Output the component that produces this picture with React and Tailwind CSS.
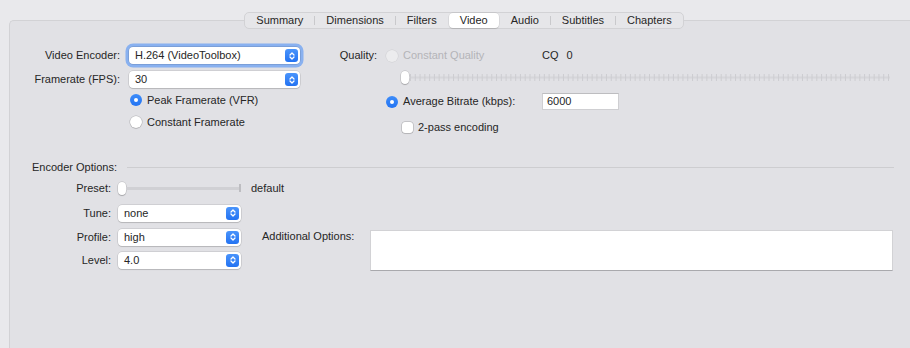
import { Fragment } from 'react';

const tabs = ['Summary', 'Dimensions', 'Filters', 'Video', 'Audio', 'Subtitles', 'Chapters'];
const activeTab = 3;

function Chevrons() {
  return (
    <svg width="8" height="10" viewBox="0 0 8 10" fill="none">
      <path d="M2 4 L4 2 L6 4" stroke="white" strokeWidth="1.3" strokeLinecap="round" strokeLinejoin="round" />
      <path d="M2 6 L4 8 L6 6" stroke="white" strokeWidth="1.3" strokeLinecap="round" strokeLinejoin="round" />
    </svg>
  );
}

function Select({ value, className, focused }) {
  const base =
    'flex h-[17px] shrink-0 items-center justify-between rounded-[4px] bg-white pl-[6px] pr-[2px] ';
  const ring = focused
    ? 'shadow-[0_0_0_0.5px_rgba(0,0,0,0.2),0_0_0_3.5px_rgba(78,145,246,0.6)]'
    : 'shadow-[0_0_0_0.5px_rgba(0,0,0,0.16),0_1px_1px_rgba(0,0,0,0.12)]';
  return (
    <div className={base + ring + ' ' + className}>
      <span>{value}</span>
      <span className="flex h-[13px] w-[13px] items-center justify-center rounded-[3px] bg-gradient-to-b from-[#4a94fb] to-[#2272f2]">
        <Chevrons />
      </span>
    </div>
  );
}

function Radio({ checked, disabled }) {
  if (checked) {
    return (
      <span className="flex h-[12px] w-[12px] shrink-0 items-center justify-center rounded-full bg-gradient-to-b from-[#3d8cf9] to-[#2374f3]">
        <span className="h-[4px] w-[4px] rounded-full bg-white" />
      </span>
    );
  }
  return (
    <span
      className={
        disabled
          ? 'h-[12px] w-[12px] shrink-0 rounded-full bg-[#ececee] shadow-[0_0_0_0.5px_rgba(0,0,0,0.08)]'
          : 'h-[12px] w-[12px] shrink-0 rounded-full bg-white shadow-[0_0_0_0.5px_rgba(0,0,0,0.22),0_1px_1px_rgba(0,0,0,0.1)]'
      }
    />
  );
}

function Thumb() {
  return (
    <span className="h-[13px] w-[8px] shrink-0 rounded-[4px] bg-white shadow-[0_0_0_0.5px_rgba(0,0,0,0.18),0_1px_1px_rgba(0,0,0,0.18)]" />
  );
}

function TickTrack() {
  const ticks = Array.from({ length: 101 }, (_, i) => 1 + i * 4.78);
  return (
    <svg width="482" height="13" viewBox="0 0 482 13">
      <rect x="0" y="5.5" width="481" height="2" fill="#d6d6da" />
      {ticks.map((x) => (
        <rect key={x} x={x} y="3" width="1" height="7" fill="#cdcdd1" />
      ))}
    </svg>
  );
}

export default function App() {
  return (
    <div
      className="h-[348px] w-[910px] overflow-hidden bg-[#e9e9ec] pl-[9px] pt-[20px] text-[11px] text-[#262626]"
      style={{ fontFamily: '"Liberation Sans", Arial, sans-serif' }}
    >
      <div className="h-[340px] w-[909px] rounded-tl-[5px] border-l border-t border-[#d2d2d5] bg-[#e1e1e5]">
        {/* tab bar */}
        <div className="-mt-[9px] flex justify-center">
          <div className="flex h-[17px] items-center rounded-[5px] border border-[#d2d2d5] bg-[#e6e6e9]">
            {tabs.map((t, i) => (
              <Fragment key={t}>
                {i > 0 && (
                  <span
                    className={
                      i === activeTab || i === activeTab + 1
                        ? 'h-[9px] w-px bg-transparent'
                        : 'h-[9px] w-px bg-[#c9c9cc]'
                    }
                  />
                )}
                <div
                  className={
                    i === activeTab
                      ? 'flex h-[15px] items-center rounded-[4px] bg-white px-[11px] shadow-[0_0_0_0.5px_rgba(0,0,0,0.1),0_1px_1px_rgba(0,0,0,0.1)]'
                      : 'flex h-[15px] items-center px-[11px]'
                  }
                >
                  {t}
                </div>
              </Fragment>
            ))}
          </div>
        </div>

        {/* top section */}
        <div className="mt-[18px] flex items-start">
          <div className="flex w-[300px] flex-col">
            <div className="flex h-[17px] items-center">
              <span className="w-[111px] pr-[1px] text-right">Video Encoder:</span>
              <Select value="H.264 (VideoToolbox)" className="ml-[8px] w-[171px]" focused />
            </div>
            <div className="mt-[7px] flex h-[17px] items-center">
              <span className="w-[111px] pr-[1px] text-right">Framerate (FPS):</span>
              <Select value="30" className="ml-[8px] w-[171px]" />
            </div>
            <div className="ml-[120px] mt-[5px] flex h-[14px] items-center gap-[5px]">
              <Radio checked />
              <span>Peak Framerate (VFR)</span>
            </div>
            <div className="ml-[120px] mt-[8px] flex h-[14px] items-center gap-[5px]">
              <Radio />
              <span>Constant Framerate</span>
            </div>
          </div>

          <div className="flex flex-col">
            <div className="flex h-[17px] items-center">
              <span className="w-[67px] text-right">Quality:</span>
              <div className="ml-[9px] flex w-[156px] items-center gap-[5px]">
                <Radio disabled />
                <span className="text-[#b4b4b8]">Constant Quality</span>
              </div>
              <span>CQ</span>
              <span className="ml-[8px]">0</span>
            </div>
            <div className="ml-[91px] mt-[7px] flex h-[13px] items-center">
              <Thumb />
              <TickTrack />
            </div>
            <div className="mt-[9px] flex h-[17px] items-center">
              <div className="ml-[76px] flex w-[156px] items-center gap-[5px]">
                <Radio checked />
                <span>Average Bitrate (kbps):</span>
              </div>
              <div className="flex h-[17px] w-[77px] items-center border border-[#cfcfd2] border-t-[#bdbdc0] bg-white pl-[4px]">
                6000
              </div>
            </div>
            <div className="ml-[92px] mt-[11px] flex h-[12px] items-center gap-[5px]">
              <span className="h-[11px] w-[11px] rounded-[3px] bg-white shadow-[0_0_0_0.5px_rgba(0,0,0,0.25),0_1px_1px_rgba(0,0,0,0.08)]" />
              <span>2-pass encoding</span>
            </div>
          </div>
        </div>

        {/* encoder options header */}
        <div className="ml-[22px] mt-[27px] flex h-[14px] w-[862px] items-center">
          <span>Encoder Options:</span>
          <span className="ml-[10px] h-px flex-1 bg-[#cdcdd0]" />
        </div>

        {/* lower section */}
        <div className="flex items-start">
          <div className="flex w-[231px] shrink-0 flex-col">
            <div className="mt-[7px] flex h-[14px] items-center whitespace-nowrap">
              <span className="w-[101px] shrink-0 text-right">Preset:</span>
              <div className="ml-[7px] flex w-[123px] shrink-0 items-center">
                <Thumb />
                <span className="h-[3px] flex-1 bg-[#d0d0d4]" />
                <span className="h-[8px] w-[2px] bg-[#bdbdc1]" />
              </div>
              <span className="ml-[10px] shrink-0">default</span>
            </div>
            <div className="mt-[10px] flex h-[16px] items-center">
              <span className="w-[101px] shrink-0 text-right">Tune:</span>
              <Select value="none" className="ml-[7px] h-[16px] w-[123px]" />
            </div>
            <div className="mt-[8px] flex h-[16px] items-center">
              <span className="w-[101px] shrink-0 text-right">Profile:</span>
              <Select value="high" className="ml-[7px] h-[16px] w-[123px]" />
            </div>
            <div className="mt-[7px] flex h-[16px] items-center">
              <span className="w-[101px] shrink-0 text-right">Level:</span>
              <Select value="4.0" className="ml-[7px] h-[16px] w-[123px]" />
            </div>
          </div>

          <div className="ml-[21px] mt-[56px] flex items-start">
            <span className="mt-[-1px] w-[108px] shrink-0 leading-[14px]">Additional Options:</span>
            <div className="h-[41px] w-[523px] shrink-0 border border-[#d2d2d5] border-b-[#a9a9ad] bg-white" />
          </div>
        </div>
      </div>
    </div>
  );
}
